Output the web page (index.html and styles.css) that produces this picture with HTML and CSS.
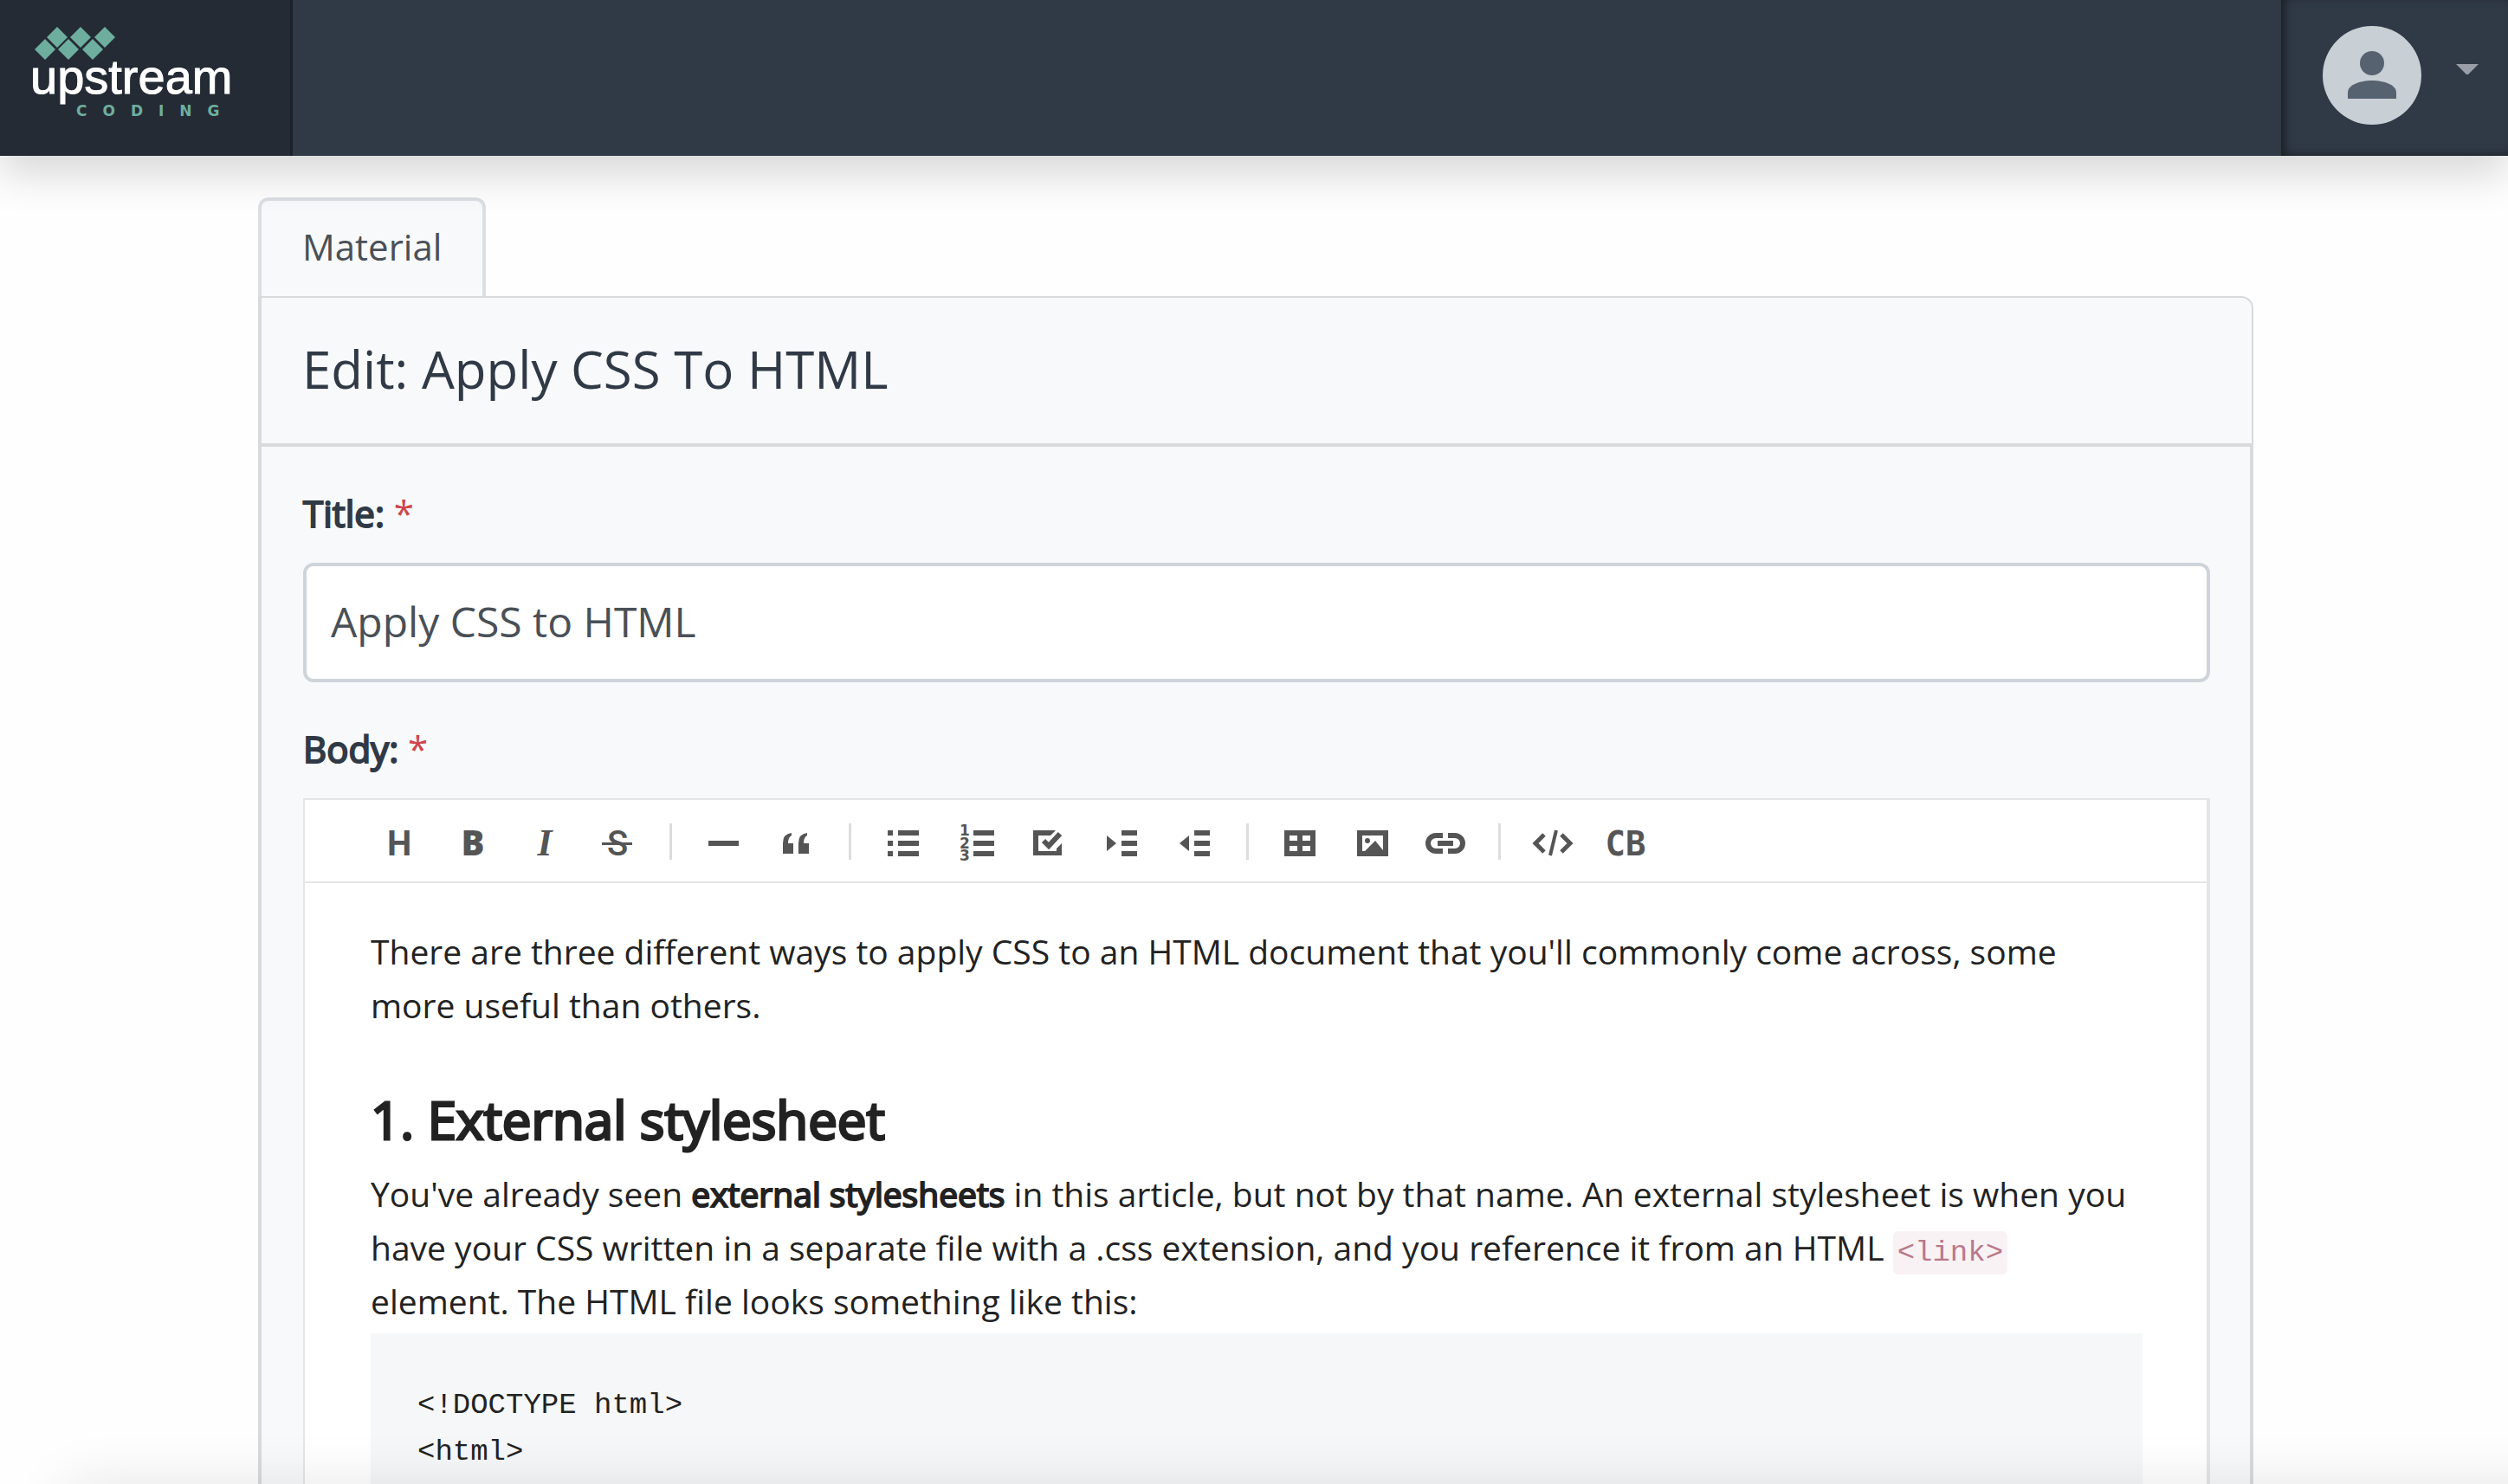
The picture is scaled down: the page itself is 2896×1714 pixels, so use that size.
FILE: index.html
```html
<!DOCTYPE html>
<html lang="en">
<head>
<meta charset="utf-8">
<title>Edit: Apply CSS To HTML</title>
<link rel="stylesheet" href="styles.css">
</head>
<body>
<header class="topbar">
  <a class="brand" href="#" aria-label="Upstream Coding">
    <svg class="brand-logo" viewBox="0 0 335 180">
      <g fill="#6eae9e">
        <path d="M52 45l12 12-12 12-12-12zM79 45l12 12-12 12-12-12zM107 45l12 12-12 12-12-12zM66 31l12 12-12 12-12-12zM93 31l12 12-12 12-12-12zM121 31l12 12-12 12-12-12z"/>
        <text class="brand-sub" x="88" y="134">CODING</text>
      </g>
      <text class="brand-name" x="35" y="108">upstream</text>
    </svg>
  </a>
  <button class="user-menu" type="button" aria-label="Account menu">
    <svg class="avatar" viewBox="0 0 114 114">
      <circle cx="57" cy="57" r="57" fill="#c8d0d6"/>
      <circle cx="57" cy="43" r="14" fill="#576270"/>
      <path d="M29 84V77C29 68 43 63 57 63S85 68 85 77V84Z" fill="#576270"/>
    </svg>
    <svg class="caret" viewBox="0 0 26 12"><path d="M0 0H26L14 12H12Z" fill="#9a9ea6"/></svg>
  </button>
</header>
<main class="page">
  <nav class="tabs"><a class="tab" href="#">Material</a></nav>
  <section class="card">
    <h1 class="card-title">Edit: Apply CSS To HTML</h1>
    <form class="card-body">
      <label class="label" for="title"><strong>Title:</strong> <span class="required">*</span></label>
      <input class="input" id="title" type="text" value="Apply CSS to HTML">
      <label class="label label-next" for="body"><strong>Body:</strong> <span class="required">*</span></label>
      <div class="editor">
        <div class="toolbar">
          <button type="button" class="tool" aria-label="Heading"><svg viewBox="0 0 60 60"><text class="glyph-h" x="30" y="46">H</text></svg></button>
          <button type="button" class="tool" aria-label="Bold"><svg viewBox="0 0 60 60"><text class="glyph-b" x="31" y="46">B</text></svg></button>
          <button type="button" class="tool" aria-label="Italic"><svg viewBox="0 0 60 60"><text class="glyph-i" x="30" y="46">I</text></svg></button>
          <button type="button" class="tool" aria-label="Strike"><svg viewBox="0 0 60 60"><text class="glyph-s" x="30" y="46">S</text><path d="M12 31h35v3H12z"/></svg></button>
          <span class="divider"></span>
          <button type="button" class="tool" aria-label="Line"><svg viewBox="0 0 60 60"><path d="M12 29h35v6H12z"/></svg></button>
          <button type="button" class="tool" aria-label="Blockquote"><svg viewBox="0 0 60 60"><path d="M14 44V32Q14 21 24 20V23Q20 25 20 32H26V44ZM32 44V32Q32 21 42 20V23Q38 25 38 32H44V44Z"/></svg></button>
          <span class="divider"></span>
          <button type="button" class="tool" aria-label="Unordered list"><svg viewBox="0 0 60 60"><path d="M12 17h6v6h-6zM12 29h6v6h-6zM12 41h6v6h-6zM24 17h24v6H24zM24 29h24v6H24zM24 41h24v6H24z"/></svg></button>
          <button type="button" class="tool" aria-label="Ordered list"><svg viewBox="0 0 60 60"><g class="glyph-n"><text x="11" y="23">1</text><text x="11" y="38">2</text><text x="11" y="52">3</text></g><path d="M27 17h24v6H27zM27 29h24v6H27zM27 41h24v6H27z"/></svg></button>
          <button type="button" class="tool" aria-label="Task"><svg viewBox="0 0 60 60"><path d="M38 17H12V46H45V32L39 38V41H18V23H32Z"/><path d="M24 29L30 35L43 21" fill="none" stroke="#555" stroke-width="6"/></svg></button>
          <button type="button" class="tool" aria-label="Indent"><svg viewBox="0 0 60 60"><path d="M13 23L24 32L13 41zM30 17h18v6H30zM30 29h18v6H30zM30 41h18v6H30z"/></svg></button>
          <button type="button" class="tool" aria-label="Outdent"><svg viewBox="0 0 60 60"><path d="M24 23L13 32L24 41zM30 17h18v6H30zM30 29h18v6H30zM30 41h18v6H30z"/></svg></button>
          <span class="divider"></span>
          <button type="button" class="tool" aria-label="Insert table"><svg viewBox="0 0 60 60"><path fill-rule="evenodd" d="M11 17H47V47H11zM17 23v6h9v-6zM32 23v6h9v-6zM17 35v6h9v-6zM32 35v6h9v-6z"/></svg></button>
          <button type="button" class="tool" aria-label="Insert image"><svg viewBox="0 0 60 60"><path fill-rule="evenodd" d="M11 17H47V47H11zM17 23V41H20L32 29L41 40V23z"/><circle cx="23" cy="29" r="3"/></svg></button>
          <button type="button" class="tool" aria-label="Insert link"><svg viewBox="0 0 60 60"><path d="M26 23H18a9 9 0 0 0 0 18H26M32 23H40a9 9 0 0 1 0 18H32M20 32H38" fill="none" stroke="#555" stroke-width="6"/></svg></button>
          <span class="divider"></span>
          <button type="button" class="tool" aria-label="Inline code"><svg viewBox="0 0 60 60"><path d="M20 22L10 32L20 42M40 22L50 32L40 42" fill="none" stroke="#555" stroke-width="5"/><path d="M34 17L27 46" stroke="#555" stroke-width="4"/></svg></button>
          <button type="button" class="tool" aria-label="Code block"><svg viewBox="0 0 60 60"><text class="glyph-cb" x="30" y="46">CB</text></svg></button>
        </div>
        <div class="content" id="body" contenteditable="true">
          <p>There are three different ways to apply CSS to an HTML document that you'll commonly come across, some more useful than others.</p>
          <h2>1. External stylesheet</h2>
          <p>You've already seen <strong>external stylesheets</strong> in this article, but not by that name. An external stylesheet is when you have your CSS written in a separate file with a .css extension, and you reference it from an HTML <code>&lt;link&gt;</code> element. The HTML file looks something like this:</p>
          <pre>&lt;!DOCTYPE html&gt;
&lt;html&gt;</pre>
        </div>
      </div>
    </form>
  </section>
</main>
<div class="bottom-shade"></div>
</body>
</html>
```
FILE: styles.css
```css
* { box-sizing: border-box; }

body {
  margin: 0;
  height: 100vh;
  overflow: hidden;
  display: flex;
  flex-direction: column;
  background: #fefefe;
  color: #303a46;
  font: 42px/66px "Open Sans", sans-serif;
}

a { color: inherit; text-decoration: none; }

button { border: 0; padding: 0; background: none; }

strong { font-weight: 400; -webkit-text-stroke: 2px currentColor; }

.topbar {
  position: relative;
  z-index: 2;
  flex: none;
  display: flex;
  justify-content: space-between;
  height: 180px;
  background: #303a46;
  box-shadow: 0 22px 44px rgba(0, 0, 0, 0.15);
}

.brand {
  width: 338px;
  background: #242b35;
  border-right: 3px solid #1b222b;
}

.brand-logo { display: block; width: 335px; height: 180px; }
.brand-name { font: 56px "Liberation Sans", sans-serif; fill: #fff; stroke: #fff; stroke-width: 1px; }
.brand-sub { font: bold 17px "DejaVu Sans", sans-serif; letter-spacing: 18px; }

.user-menu {
  display: flex;
  align-items: flex-start;
  gap: 40px;
  width: 262px;
  padding: 30px 34px 0 48px;
  box-shadow: inset 6px -2px 12px -2px rgba(0, 0, 0, 0.5);
}

.avatar { width: 114px; height: 114px; }
.caret { width: 26px; height: 12px; margin-top: 44px; }

.page {
  flex: 1;
  display: flex;
  flex-direction: column;
  padding: 48px 294px 0 298px;
}

.tabs { display: flex; }

.tab {
  padding: 20px 47px 24px;
  border: 4px solid #dbdfe4;
  border-bottom: 0;
  border-radius: 12px 12px 0 0;
  background: #f8f9fb;
  color: #495057;
}

.card {
  flex: 1;
  display: flex;
  flex-direction: column;
}

.card-title {
  margin: 0;
  padding: 46px 47px 50px;
  border: 4px solid #d8dadc;
  border-width: 2px 2px 4px 4px;
  border-radius: 0 14px 0 0;
  background: #f8f9fb;
  font-size: 60px;
  line-height: 72px;
  font-weight: 400;
}

.card-body {
  flex: 1;
  display: flex;
  flex-direction: column;
  padding: 44px 46px 0 48px;
  border: 4px solid #d8dadc;
  border-width: 0 4px;
  background: #f8f9fb;
}

.label { margin-bottom: 24px; }
.label-next { margin-top: 44px; }
.required { color: #cf444b; }

.input {
  width: 100%;
  height: 138px;
  padding: 0 28px 4px;
  border: 4px solid #ced4da;
  border-radius: 12px;
  background: #fff;
  color: #495057;
  font: 48px "Open Sans", sans-serif;
}

.editor {
  flex: 1;
  display: flex;
  flex-direction: column;
  border: 2px solid #e5e5e5;
  border-width: 2px 4px 0 2px;
  background: #fff;
}

.toolbar {
  display: flex;
  align-items: center;
  height: 96px;
  padding: 2px 0 0 67px;
  border-bottom: 2px solid #e5e5e5;
}

.tool {
  display: flex;
  align-items: center;
  justify-content: center;
  width: 84px;
  height: 84px;
}

.tool svg { width: 60px; height: 60px; fill: #555; }
.divider { width: 3px; height: 42px; margin: 0 18px; background: #ddd; }

.tool text { text-anchor: middle; }
.glyph-h { font: bold 40px Roboto, sans-serif; }
.glyph-b { font: 800 40px "Open Sans", sans-serif; }
.glyph-i { font: italic bold 44px "Liberation Serif", serif; }
.glyph-s { font: 500 40px Roboto, sans-serif; }
.glyph-cb { font: bold 39px "DejaVu Sans Mono", monospace; }
.tool .glyph-n text { font: bold 17px "DejaVu Sans", sans-serif; text-anchor: start; }

.content {
  flex: 1;
  display: flex;
  flex-direction: column;
  padding: 48px 74px 0 76px;
  color: #222;
  font-size: 39px;
  line-height: 62px;
}

.content p { margin: 0; }

.content h2 {
  margin: 70px 0 24px;
  font-size: 60px;
  line-height: 62px;
  font-weight: 400;
  -webkit-text-stroke: 3px currentColor;
}

.content code {
  padding: 6px 5px;
  border-radius: 6px;
  background: #f9f2f4;
  color: #b9788b;
  font: 34px "Liberation Mono", monospace;
}

.content pre {
  flex: 1;
  margin: 6px 0 0;
  padding: 56px 54px 0;
  background: #f5f7f8;
  font: 34px/54px "Liberation Mono", monospace;
}

.bottom-shade {
  position: fixed;
  z-index: 3;
  top: 100%;
  left: 76px;
  width: 100%;
  height: 120px;
  box-shadow: 0 0 64px rgba(0, 0, 0, 0.1);
}
```
